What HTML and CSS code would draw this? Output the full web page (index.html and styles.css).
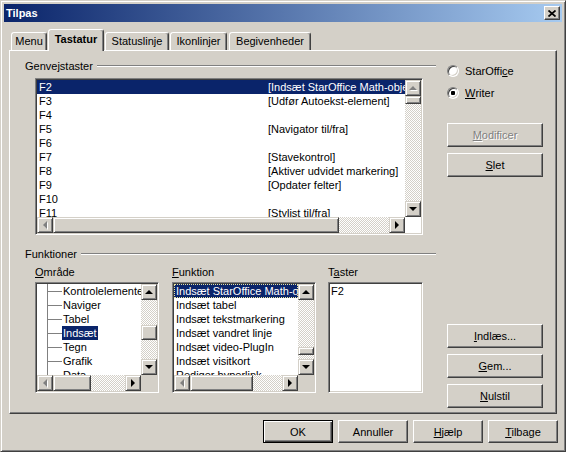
FILE: index.html
```html
<!DOCTYPE html>
<html lang="da">
<head>
    <meta charset="UTF-8">
    <meta name="viewport" content="width=device-width, initial-scale=1.0">
    <title>Tilpas</title>
    <link rel="stylesheet" href="styles.css">
</head>
<body>
    <div class="window">
        <div class="titlebar">
            <span class="title">Tilpas</span>
            <div class="close">
                <svg width="8" height="7" viewBox="0 0 8 7"><path d="M0.5 0.5 7.5 6.5 M7.5 0.5 0.5 6.5" stroke="#000" stroke-width="1.7" fill="none"/></svg>
            </div>
        </div>

        <div class="tabs">
            <div class="tab tab-menu">Menu</div>
            <div class="tab tab-active">Tastatur</div>
            <div class="tab tab-status">Statuslinje</div>
            <div class="tab tab-icons">Ikonlinjer</div>
            <div class="tab tab-events">Begivenheder</div>
        </div>

        <div class="panel">
            <div class="main-col">
                <div class="group-head">Genvejstaster</div>
                <div class="listbox list-keys">
                    <div class="list-view">
                        <div class="row sel"><span class="key">F2</span><span>[Indsæt StarOffice Math-objekt]</span></div>
                        <div class="row"><span class="key">F3</span><span>[Udfør Autoekst-element]</span></div>
                        <div class="row"><span class="key">F4</span></div>
                        <div class="row"><span class="key">F5</span><span>[Navigator til/fra]</span></div>
                        <div class="row"><span class="key">F6</span></div>
                        <div class="row"><span class="key">F7</span><span>[Stavekontrol]</span></div>
                        <div class="row"><span class="key">F8</span><span>[Aktiver udvidet markering]</span></div>
                        <div class="row"><span class="key">F9</span><span>[Opdater felter]</span></div>
                        <div class="row"><span class="key">F10</span></div>
                        <div class="row"><span class="key">F11</span><span>[Stylist til/fra]</span></div>
                    </div>
                    <div class="vscroll">
                        <div class="sb-btn"><i class="arrow up off"></i></div>
                        <div class="thumb-v"></div>
                        <div class="sb-btn end"><i class="arrow down"></i></div>
                    </div>
                    <div class="hscroll">
                        <div class="sb-btn"><i class="arrow left off"></i></div>
                        <div class="thumb-h keys-thumb"></div>
                        <div class="sb-btn end"><i class="arrow right"></i></div>
                    </div>
                    <div class="corner white"></div>
                </div>

                <div class="group-head second">Funktioner</div>
                <div class="fn-cols">
                    <div class="fn-col col-area">
                        <div class="col-label"><u>O</u>mråde</div>
                        <div class="listbox">
                            <div class="list-view tree">
                                <div class="row">Kontrolelementer</div>
                                <div class="row">Naviger</div>
                                <div class="row">Tabel</div>
                                <div class="row"><span class="sel-text">Indsæt</span></div>
                                <div class="row">Tegn</div>
                                <div class="row">Grafik</div>
                                <div class="row">Data</div>
                            </div>
                            <div class="vscroll">
                                <div class="sb-btn"><i class="arrow up"></i></div>
                                <div class="thumb-v area-thumb"></div>
                                <div class="sb-btn end"><i class="arrow down"></i></div>
                            </div>
                            <div class="hscroll">
                                <div class="sb-btn"><i class="arrow left off"></i></div>
                                <div class="thumb-h area-hthumb"></div>
                                <div class="sb-btn end"><i class="arrow right"></i></div>
                            </div>
                            <div class="corner"></div>
                        </div>
                    </div>
                    <div class="fn-col col-func">
                        <div class="col-label"><u>F</u>unktion</div>
                        <div class="listbox">
                            <div class="list-view">
                                <div class="row sel focus">Indsæt StarOffice Math-objekt</div>
                                <div class="row">Indsæt tabel</div>
                                <div class="row">Indsæt tekstmarkering</div>
                                <div class="row">Indsæt vandret linje</div>
                                <div class="row">Indsæt video-PlugIn</div>
                                <div class="row">Indsæt visitkort</div>
                                <div class="row">Rediger hyperlink</div>
                            </div>
                            <div class="vscroll">
                                <div class="sb-btn"><i class="arrow up"></i></div>
                                <div class="thumb-v func-thumb"></div>
                                <div class="sb-btn end"><i class="arrow down"></i></div>
                            </div>
                            <div class="hscroll">
                                <div class="sb-btn"><i class="arrow left off"></i></div>
                                <div class="thumb-h func-hthumb"></div>
                                <div class="sb-btn end"><i class="arrow right"></i></div>
                            </div>
                            <div class="corner"></div>
                        </div>
                    </div>
                    <div class="fn-col col-keys">
                        <div class="col-label">T<u>a</u>ster</div>
                        <div class="listbox plain">
                            <div class="list-view">
                                <div class="row">F2</div>
                            </div>
                        </div>
                    </div>
                </div>
            </div>

            <div class="side">
                <div class="radio first"><span class="radio-dot"></span>StarOffi<u>c</u>e</div>
                <div class="radio"><span class="radio-dot checked"></span><u>W</u>riter</div>
                <div class="btn disabled modify"><span><u>M</u>odificer</span></div>
                <div class="btn gap"><span><u>S</u>let</span></div>
                <div class="btn load"><span><u>I</u>ndlæs...</span></div>
                <div class="btn gap"><span><u>G</u>em...</span></div>
                <div class="btn gap"><span><u>N</u>ulstil</span></div>
            </div>
        </div>

        <div class="footer">
            <div class="btn default">OK</div>
            <div class="btn">Annuller</div>
            <div class="btn"><span><u>H</u>jælp</span></div>
            <div class="btn"><span><u>T</u>ilbage</span></div>
        </div>
    </div>
</body>
</html>
```

FILE: styles.css
```css
body {
    margin: 0;
    background-color: #d4d0c8;
    font-family: "Liberation Sans", Arial, sans-serif;
    font-size: 11px;
    color: #000;
}
.window {
    width: 566px;
    height: 452px;
    box-sizing: border-box;
    border: 1px solid;
    border-color: #d4d0c8 #404040 #404040 #d4d0c8;
    box-shadow: inset 1px 1px #fff, inset -1px -1px #808080;
    padding: 3px;
    display: flex;
    flex-direction: column;
}
.titlebar {
    height: 18px;
    flex-shrink: 0;
    display: flex;
    align-items: center;
    justify-content: space-between;
    padding: 0 2px;
    background: linear-gradient(to right, #0a246a, #a6caf0);
    color: #fff;
    font-weight: bold;
}
.close {
    width: 16px;
    height: 14px;
    box-sizing: border-box;
    background-color: #d4d0c8;
    border: 1px solid;
    border-color: #fff #404040 #404040 #fff;
    box-shadow: inset -1px -1px #808080;
    display: flex;
    align-items: center;
    justify-content: center;
    padding-right: 1px;
}

/* tabs */
.tabs {
    display: flex;
    align-items: flex-end;
    gap: 1px;
    height: 21px;
    margin-top: 7px;
    padding-left: 7px;
    position: relative;
    z-index: 1;
}
.tab {
    height: 18px;
    box-sizing: border-box;
    border: 1px solid;
    border-bottom: none;
    border-color: #fff #404040 transparent #fff;
    box-shadow: inset -1px 0 #808080;
    border-radius: 3px 3px 0 0;
    background-color: #d4d0c8;
    text-align: center;
    line-height: 17px;
}
.tab-menu { width: 36px; }
.tab-active {
    width: 56px;
    height: 22px;
    margin-bottom: -1px;
    font-weight: bold;
    line-height: 18px;
}
.tab-status { width: 64px; }
.tab-icons { width: 57px; }
.tab-events { width: 82px; margin-left: 1px; }

.panel {
    margin-left: 5px;
    width: 548px;
    height: 364px;
    box-sizing: border-box;
    border: 1px solid;
    border-color: #fff #404040 #404040 #fff;
    box-shadow: inset -1px -1px #808080;
    padding: 8px 0 0 7px;
    display: flex;
}
.main-col {
    width: 419px;
}
.group-head {
    display: flex;
    align-items: center;
    height: 13px;
    padding-left: 8px;
}
.group-head::after {
    content: "";
    flex: 1;
    margin-left: 4px;
    border-top: 1px solid #808080;
    border-bottom: 1px solid #fff;
}
.group-head.second {
    margin-top: 12px;
}

/* list boxes */
.listbox {
    box-sizing: border-box;
    border: 1px solid;
    border-color: #808080 #fff #fff #808080;
    box-shadow: inset 1px 1px #404040, inset -1px -1px #d4d0c8;
    padding: 1px;
    background-color: #fff;
    display: grid;
    grid-template-columns: 1fr 16px;
    grid-template-rows: 1fr 16px;
}
.listbox.plain {
    display: block;
}
.list-keys {
    width: 388px;
    height: 157px;
    margin: 6px 0 0 18px;
}
.list-view {
    overflow: hidden;
    min-width: 0;
    min-height: 0;
}
.row {
    height: 14px;
    line-height: 14px;
    padding-left: 2px;
    white-space: nowrap;
    display: flex;
}
.row .key {
    width: 229px;
    flex-shrink: 0;
}
.row.sel {
    background-color: #0a246a;
    color: #fff;
}
.row.focus {
    outline: 1px dotted #e8e4a0;
    outline-offset: -1px;
}
.tree {
    background: linear-gradient(#808080, #808080) no-repeat 10px 0 / 1px 100%;
}
.tree .row {
    padding-left: 25px;
    background: linear-gradient(#808080, #808080) no-repeat 10px 7px / 15px 1px;
}
.sel-text {
    background-color: #0a246a;
    color: #fff;
    padding: 0 1px;
}
.tree .row:not(:has(.sel-text)) {
    padding-left: 26px;
}

/* scrollbars */
.vscroll,
.hscroll {
    display: flex;
    background-color: #fff;
    background-image: repeating-conic-gradient(#d4d0c8 0 25%, #fff 0 50%);
    background-size: 2px 2px;
}
.vscroll {
    flex-direction: column;
}
.sb-btn,
.thumb-v,
.thumb-h {
    box-sizing: border-box;
    background-color: #d4d0c8;
    border: 1px solid;
    border-color: #d4d0c8 #404040 #404040 #d4d0c8;
    box-shadow: inset 1px 1px #fff, inset -1px -1px #808080;
    flex-shrink: 0;
}
.sb-btn {
    width: 16px;
    height: 16px;
    display: flex;
    align-items: center;
    justify-content: center;
}
.vscroll .end { margin-top: auto; }
.hscroll .end { margin-left: auto; }
.thumb-v { width: 16px; height: 8px; }
.thumb-h { height: 16px; }
.area-thumb { margin-top: 25px; height: 15px; }
.func-thumb { margin-top: 47px; }
.keys-thumb { width: 286px; }
.area-hthumb { width: 38px; }
.func-hthumb { width: 63px; }
.corner { background-color: #d4d0c8; }
.corner.white { background-color: #fff; }

.arrow {
    width: 0;
    height: 0;
    border: 4px solid transparent;
}
.arrow.up { border-bottom-color: #000; border-top-width: 0; }
.arrow.down { border-top-color: #000; border-bottom-width: 0; }
.arrow.left { border-right-color: #000; border-left-width: 0; }
.arrow.right { border-left-color: #000; border-right-width: 0; }
.arrow.off { filter: drop-shadow(1px 1px 0 #fff); }
.arrow.up.off { border-bottom-color: #808080; }
.arrow.left.off { border-right-color: #808080; }

/* function columns */
.fn-cols {
    display: flex;
    margin: 6px 0 0 18px;
}
.col-label {
    height: 13px;
    line-height: 13px;
    margin-bottom: 3px;
}
.fn-col .listbox {
    height: 111px;
}
.col-area { width: 124px; }
.col-func { width: 144px; margin-left: 13px; }
.col-keys { width: 95px; margin-left: 12px; }
.col-keys .row { padding-left: 1px; }

/* right side */
.side {
    width: 96px;
    margin-left: 11px;
    display: flex;
    flex-direction: column;
}
.radio {
    display: flex;
    align-items: center;
    height: 13px;
    margin-top: 9px;
}
.radio.first { margin-top: 5px; }
.radio-dot {
    width: 12px;
    height: 12px;
    box-sizing: border-box;
    border-radius: 50%;
    border: 1px solid;
    border-color: #808080 #fff #fff #808080;
    box-shadow: inset 1px 1px #404040, inset -1px -1px #d4d0c8;
    background-color: #fff;
    margin: 0 6px 0 0;
}
.radio-dot.checked {
    background: radial-gradient(circle, #000 0 2px, #fff 2.5px);
}

.btn {
    height: 24px;
    box-sizing: border-box;
    background-color: #d4d0c8;
    border: 1px solid;
    border-color: #fff #404040 #404040 #fff;
    box-shadow: inset -1px -1px #808080;
    display: flex;
    align-items: center;
    justify-content: center;
}
.btn.gap { margin-top: 6px; }
.btn.modify { margin-top: 24px; }
.btn.load { margin-top: 147px; }
.btn.disabled {
    color: #808080;
    text-shadow: 1px 1px 0 #fff;
}
.footer {
    display: flex;
    justify-content: flex-end;
    gap: 5px;
    margin-top: 6px;
    padding-right: 4px;
}
.footer .btn {
    width: 70px;
    height: 23px;
}
.btn.default {
    border-color: #000;
    box-shadow: inset 1px 1px #fff, inset -1px -1px #404040, inset -2px -2px #808080;
}
```
